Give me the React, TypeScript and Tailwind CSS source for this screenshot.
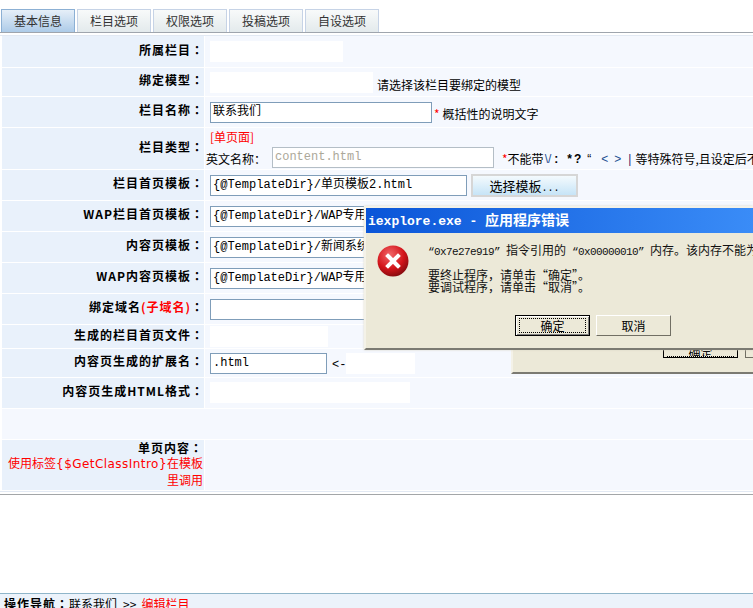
const mono = "font-['Liberation_Mono','Noto_Sans_CJK_SC',monospace]";
const halfWidth = "text-[11px] tracking-[-0.6px] font-['Liberation_Mono',monospace]";

function WhiteBox({ className }: { className: string }) {
  return <div className={`bg-white ${className}`} />;
}

function TextInput({
  value,
  className,
  disabled,
}: {
  value: string;
  className: string;
  disabled?: boolean;
}) {
  return (
    <div
      className={`flex h-[21px] shrink-0 items-center overflow-hidden whitespace-nowrap border bg-white pl-[2px] text-[12px] ${mono} ${
        disabled ? "border-[#b4bec6] text-[#aca899]" : "border-[#7f9db9] text-black"
      } ${className}`}
    >
      {value}
    </div>
  );
}

function Row({
  label,
  height,
  children,
}: {
  label: React.ReactNode;
  height: string;
  children?: React.ReactNode;
}) {
  return (
    <div className={`flex gap-[1px] ${height}`}>
      <div className="flex w-[202px] shrink-0 items-center justify-end whitespace-nowrap bg-[#e9f1fb] pb-[4px] text-[12px] font-bold tracking-[1px] text-black">
        {label}
        <span className="font-['Noto_Sans_CJK_TC',sans-serif]">：</span>
      </div>
      <div className="flex min-w-0 flex-1 items-center overflow-hidden whitespace-nowrap bg-[#f5f8fe] pl-[5px] text-[12px] text-black">
        {children}
      </div>
    </div>
  );
}

const tabs = ["基本信息", "栏目选项", "权限选项", "投稿选项", "自设选项"];

function ErrorDialog() {
  return (
    <div className="absolute left-[364px] top-[206px] h-[144px] w-[389px] border-b-2 border-l-2 border-t-2 border-b-[#7b7a72] border-l-[#f4f2e8] border-t-[#f4f2e8] bg-[#ece9d8] shadow-[0_0_2px_#d8d6c8]">
      <div className={`flex h-[25px] items-center whitespace-pre bg-gradient-to-r from-[#0a55d8] to-[#3a8cf7] pl-[2px] pt-[2px] text-[13px] font-bold text-white ${mono}`}>
        iexplore.exe - <span className="text-[14px]">应用程序错误</span>
      </div>
      <div className="flex">
        <svg width="32" height="32" viewBox="0 0 32 32" className="ml-[11px] mt-[12px] shrink-0">
          <defs>
            <radialGradient id="err" cx="40%" cy="30%" r="75%">
              <stop offset="0%" stopColor="#f2686a" />
              <stop offset="60%" stopColor="#d3141a" />
              <stop offset="100%" stopColor="#7d0a0e" />
            </radialGradient>
          </defs>
          <circle cx="16" cy="16" r="15.5" fill="url(#err)" />
          <path d="M11 11l10 10M21 11l-10 10" stroke="#fff" strokeWidth="4" strokeLinecap="square" />
        </svg>
        <div className="ml-[19px] whitespace-pre pt-[11px] text-[12px] leading-[12px] text-[#111]">
          <p>
            <span className={halfWidth}>“0x7e27e919” </span>指令引用的
            <span className={halfWidth}> “0x00000010” </span>内存。该内存不能为 “read”。
          </p>
          <p className="mt-[11px]">要终止程序，请单击“确定”。</p>
          <p>要调试程序，请单击“取消”。</p>
        </div>
      </div>
      <div className="absolute left-[149px] top-[107px] flex gap-[6px] text-[12px] text-black">
        <button className="flex h-[21px] w-[75px] items-center justify-center border border-black bg-[#ece9d8] shadow-[inset_1px_1px_0_#fff,inset_-1px_-1px_0_#808080]">
          <span className="flex h-[15px] w-[67px] items-center justify-center border border-dotted border-black">确定</span>
        </button>
        <button className="flex h-[21px] w-[75px] items-center justify-center border border-b-[#716f64] border-l-white border-r-[#716f64] border-t-white bg-[#ece9d8]">
          取消
        </button>
      </div>
    </div>
  );
}

function BackDialog() {
  return (
    <div className="absolute left-[511px] top-[300px] h-[74px] w-[242px] border-b-2 border-l-2 border-b-[#7b7a72] border-l-[#f4f2e8] bg-[#ece9d8]">
      <div className="absolute left-[150px] top-[46px] flex h-[12px] w-[75px] items-end justify-center overflow-hidden border-x border-b border-black text-[12px] leading-[10px]">
        <span className="flex h-[9px] w-[67px] justify-center overflow-hidden border-b border-dotted border-black">确定</span>
      </div>
      <div className="absolute left-[232px] top-[46px] h-[12px] w-[10px] border-b border-l border-[#716f64]" />
    </div>
  );
}

export default function App() {
  return (
    <div className="relative h-[608px] w-[753px] overflow-hidden bg-white font-['Noto_Sans_CJK_SC','Liberation_Sans',sans-serif]">
      <div className="flex h-[33px] items-end gap-[2px] border-b border-[#9fa5ad] pl-[1px]">
        {tabs.map((tab, index) => (
          <div
            key={tab}
            className={
              index === 0
                ? "flex h-[23px] w-[74px] items-center justify-center border-x border-t border-[#8cb0d4] bg-gradient-to-b from-[#e6eff8] to-[#adcbe8] text-[12px] text-[#333]"
                : "flex h-[23px] w-[74px] items-center justify-center border-x border-t border-[#c6d3e6] bg-gradient-to-b from-[#f8fafa] to-[#e3eaec] text-[12px] text-[#333]"
            }
          >
            {tab}
          </div>
        ))}
      </div>

      <div className="mt-[2px] flex flex-col gap-[1px] border-t border-[#e2e9f3] pl-[2px]">
        <Row label="所属栏目" height="h-[31px]">
          <WhiteBox className="h-[21px] w-[133px]" />
        </Row>
        <Row label="绑定模型" height="h-[28px]">
          <WhiteBox className="h-[21px] w-[163px]" />
          <span className="ml-[4px] mt-[6px]">请选择该栏目要绑定的模型</span>
        </Row>
        <Row label="栏目名称" height="h-[30px]">
          <TextInput value="联系我们" className="w-[222px]" />
          <span className="ml-[2px] mt-[4px] text-[#f00]">*</span>
          <span className="ml-[3px] mt-[4px]">概括性的说明文字</span>
        </Row>
        <Row label="栏目类型" height="h-[41px]">
          <div className="-ml-[4px] flex h-full flex-col pt-[2px]">
            <span className="ml-[4px] leading-[14px] text-[#f00]">[单页面]</span>
            <div className="mt-[2px] flex items-center">
              <span className="mt-[4px] w-[66px]">英文名称：</span>
              <TextInput value="content.html" disabled className="w-[222px]" />
              <span className="ml-[8px] mt-[4px] text-[#f00]">*</span>
              <span className="mt-[4px]">不能带</span>
              <span className="mt-[4px] inline-flex shrink-0 font-['Liberation_Sans',sans-serif]">
                <span className="ml-[1px] text-[#1d4f91]">\/</span>
                <span className="ml-[3px] font-bold">:</span>
                <span className="ml-[9px] font-bold">*</span>
                <span className="ml-[2px] font-bold">?</span>
                <span className="ml-[6px]">“</span>
                <span className="ml-[10px] text-[#1d4f91]">&lt;</span>
                <span className="ml-[6px] text-[#1d4f91]">&gt;</span>
                <span className="ml-[7px] text-[#3a1a6a]">|</span>
              </span>
              <span className="ml-[4px] mt-[4px]">等特殊符号,且设定后不能修改</span>
            </div>
          </div>
        </Row>
        <Row label="栏目首页模板" height="h-[30px]">
          <TextInput value="{@TemplateDir}/单页模板2.html" className="w-[257px]" />
          <button className="ml-[4px] h-[23px] w-[107px] shrink-0 border-2 border-[#d6d6d6] bg-gradient-to-b from-[#f4fafd] to-[#c6e4f7] text-[13px] text-black">
            选择模板<span className={`text-[10px] ${mono}`}>...</span>
          </button>
        </Row>
        <Row label="WAP栏目首页模板" height="h-[30px]">
          <TextInput value="{@TemplateDir}/WAP专用模板/栏目页.html" className="w-[257px]" />
        </Row>
        <Row label="内容页模板" height="h-[30px]">
          <TextInput value="{@TemplateDir}/新闻系统/内容页.html" className="w-[257px]" />
        </Row>
        <Row label="WAP内容页模板" height="h-[30px]">
          <TextInput value="{@TemplateDir}/WAP专用模板/内容页.html" className="w-[257px]" />
        </Row>
        <Row
          label={
            <>
              绑定域名<span className="text-[#f00]">(子域名)</span>
            </>
          }
          height="h-[30px]"
        >
          <TextInput value="" className="w-[257px]" />
        </Row>
        <Row label="生成的栏目首页文件" height="h-[23px]">
          <WhiteBox className="h-[21px] w-[118px]" />
        </Row>
        <Row label="内容页生成的扩展名" height="h-[28px]">
          <TextInput value=".html" className="w-[117px]" />
          <span className={`ml-[5px] mt-[4px] ${mono}`}>&lt;-</span>
          <WhiteBox className="h-[21px] w-[69px]" />
        </Row>
        <Row label="内容页生成HTML格式" height="h-[30px]">
          <WhiteBox className="mb-[2px] h-[21px] w-[200px]" />
        </Row>
        <div className="h-[30px] bg-[#f5f8fe]" />
        <div className="flex h-[50px] gap-[1px]">
          <div className="w-[202px] shrink-0 whitespace-nowrap bg-[#e9f1fb] pr-[1px] text-right text-[12px] leading-[15px] text-[#f00]">
            <div className="font-bold tracking-[1px] text-black">
              单页内容<span className="font-['Noto_Sans_CJK_TC',sans-serif]">：</span>
            </div>
            使用标签<span className="font-['DejaVu_Sans',sans-serif] tracking-[0.45px]">{"{$GetClassIntro}"}</span>在模板
            <br />
            里调用
          </div>
          <div className="flex-1 bg-[#f5f8fe]" />
        </div>
      </div>

      <div className="mt-[1px] h-[1px] bg-[#e2e9f3]" />
      <div className="mt-[2px] h-[1px] bg-[#a3a6a8]" />

      <div className="mt-[98px] flex h-[15px] items-start overflow-hidden border-t border-[#8fb5c9] bg-[#ecf3fb] pl-[4px] pt-[2px] text-[12px] leading-[15px] text-black">
        <span className="font-bold tracking-[1px]">
          操作导航<span className="font-['Noto_Sans_CJK_TC',sans-serif]">：</span>
        </span>
        <span>联系我们</span>
        <span className="ml-[6px]">&gt;&gt;</span>
        <span className="ml-[5px] text-[#f00]">编辑栏目</span>
      </div>

      <BackDialog />
      <ErrorDialog />
    </div>
  );
}
